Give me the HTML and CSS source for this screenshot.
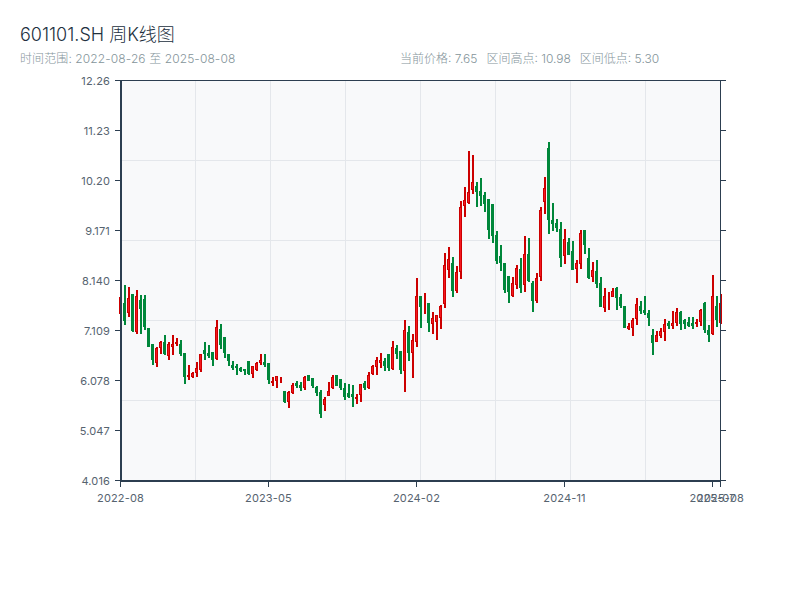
FILE: index.html
```html
<!DOCTYPE html>
<html lang="zh-CN">
<head>
  <meta charset="UTF-8">
  <title>601101.SH 周K线图</title>
  <link rel="stylesheet" href="styles.css">
</head>
<body>
  <header class="header">
    <h1 class="title">601101.SH 周K线图</h1>
    <div class="meta">
      <span class="range">时间范围: 2022-08-26 至 2025-08-08</span>
      <div class="stats">
        <span>当前价格: 7.65</span>
        <span>区间高点: 10.98</span>
        <span>区间低点: 5.30</span>
      </div>
    </div>
  </header>
  <svg class="chart" id="chart" width="800" height="440" viewBox="0 70 800 440"></svg>
  <script src="chart.js"></script>
</body>
</html>
```
FILE: styles.css
```css
* {
  margin: 0;
  padding: 0;
  box-sizing: border-box;
}

body {
  width: 800px;
  height: 600px;
  overflow: hidden;
  background: #fff;
  font-family: Inter, "Noto Sans CJK SC", sans-serif;
}

.header {
  height: 70px;
  padding: 25px 20px 0;
}

.title {
  font-size: 18px;
  font-weight: 300;
  line-height: 20px;
  color: #22303e;
}

.meta {
  display: grid;
  grid-template-columns: 380px auto;
  margin-top: 6px;
  font-size: 12px;
  font-weight: 300;
  line-height: 16px;
  color: #84949a;
}

.range {
  letter-spacing: 0.1px;
}

.stats {
  display: flex;
  gap: 9px;
}

.chart {
  display: block;
}

.plot {
  fill: #f8f9fa;
}

.grid {
  fill: #e4e7eb;
}

.axis {
  fill: #2c3e50;
}

.label {
  font-size: 11px;
  letter-spacing: 0.15px;
  fill: #56636f;
}

.label-y {
  text-anchor: end;
}

.label-x {
  text-anchor: middle;
}

.up .wick {
  fill: #cc0000;
}

.up .body {
  fill: #f4181f;
  stroke: #cc0000;
}

.down .wick {
  fill: #00873a;
}

.down .body {
  fill: #00873a;
  stroke: #00873a;
}
```
FILE: chart.js
```js
// y positions in page pixels: wick top, wick bottom, body top, body bottom, 1 = up (red)
const candles = [
  [297,314,297,314,1],[285,325,303,321,0],[287,317,298,313,1],[294,332,294,331,0],[290,334,296,332,1],
  [295,334,300,309,0],[295,330,299,327,0],[328,347,328,347,0],[344,365,344,360,0],[347,367,348,363,1],
  [341,354,342,348,1],[335,355,342,354,0],[342,360,344,356,1],[335,355,344,347,1],[338,346,342,344,1],
  [340,356,344,354,0],[353,384,353,377,0],[365,380,375,377,1],[372,378,373,377,1],[362,377,368,373,1],
  [354,372,354,370,1],[342,360,350,354,0],[345,358,353,356,0],[352,366,352,360,0],[320,360,327,359,1],
  [324,349,329,345,0],[337,358,337,353,0],[354,366,354,361,0],[361,370,365,368,0],[364,375,366,368,0],
  [367,372,368,371,0],[369,375,369,371,0],[361,375,361,374,0],[366,378,366,374,1],[362,371,363,370,1],
  [354,365,360,363,1],[354,367,362,365,0],[363,384,363,380,0],[377,386,381,383,1],[376,388,376,381,1],
  [377,383,377,378,1],[391,403,391,402,0],[391,408,392,402,1],[383,394,385,393,1],[381,388,383,386,0],
  [382,391,385,388,0],[376,390,377,388,1],[375,381,375,381,0],[378,388,378,386,0],[386,396,387,393,0],
  [390,418,392,414,0],[397,411,399,405,1],[382,396,391,396,1],[375,389,377,388,1],[375,386,375,386,0],
  [379,390,379,388,0],[383,400,388,397,0],[384,398,393,397,0],[385,407,394,397,0],[394,404,397,399,1],
  [384,402,384,395,1],[381,390,383,388,0],[372,389,375,388,1],[365,375,366,374,1],[357,375,360,367,1],
  [353,368,360,363,1],[358,371,361,366,0],[354,371,354,368,0],[341,370,347,369,1],[345,359,348,354,0],
  [351,374,351,370,0],[320,392,330,371,1],[326,361,332,353,0],[334,378,340,353,1],[278,347,296,342,1],
  [296,328,296,307,0],[293,314,305,306,1],[303,332,303,323,0],[312,334,318,324,1],[315,340,315,322,1],
  [305,329,306,318,1],[253,308,265,304,1],[247,278,259,270,1],[257,297,263,291,0],[266,293,272,291,1],
  [201,279,207,272,1],[187,217,200,206,1],[151,204,192,203,1],[155,194,182,190,1],[182,207,186,192,0],
  [178,206,191,196,0],[192,212,195,204,0],[199,239,199,230,0],[204,243,204,236,0],[231,264,235,261,0],
  [245,271,256,263,0],[263,293,263,290,0],[276,303,276,292,0],[277,297,283,296,1],[265,289,268,285,1],
  [258,293,269,288,0],[236,292,254,285,1],[238,282,254,281,0],[281,312,283,301,0],[273,303,278,301,1],
  [207,281,210,277,1],[177,214,188,202,1],[142,234,148,220,0],[203,231,220,224,0],[219,232,223,228,0],
  [222,267,229,258,0],[229,264,239,256,1],[238,255,242,255,0],[241,270,251,270,0],[260,283,263,269,1],
  [230,269,233,264,1],[230,254,230,245,0],[248,279,258,278,0],[262,282,270,277,1],[260,288,271,284,0],
  [277,307,283,307,0],[288,312,296,308,1],[292,310,295,296,1],[288,297,291,297,1],[287,310,288,298,0],
  [294,308,297,306,0],[306,328,306,328,0],[323,330,326,329,1],[318,336,320,328,1],[298,325,304,319,1],
  [301,314,306,311,0],[296,315,310,313,0],[310,326,313,318,0],[329,355,335,343,0],[331,342,335,342,1],
  [328,338,331,336,1],[319,341,324,332,1],[321,329,323,326,0],[311,329,323,326,1],[308,326,312,323,1],
  [311,330,312,324,0],[319,329,320,324,0],[317,327,322,326,0],[317,329,323,326,0],[319,327,322,324,1],
  [309,326,310,322,1],[302,333,303,330,0],[325,342,330,335,0],[275,335,296,334,1],[296,327,306,320,0],
  [294,324,303,323,1]
];

const yLabels = ['12.26', '11.23', '10.20', '9.171', '8.140', '7.109', '6.078', '5.047', '4.016'];
const xLabels = [[120, '2022-08'], [268, '2023-05'], [416, '2024-02'], [564, '2024-11'], [712, '2025-07'], [720, '2025-08']];

let out = '<rect class="plot" x="120" y="80" width="600" height="400"/>';

// grid
for (let x = 195; x < 720; x += 75) out += `<rect class="grid" x="${x}" y="80" width="1" height="400"/>`;
for (let y = 160; y < 480; y += 80) out += `<rect class="grid" x="120" y="${y}" width="600" height="1"/>`;

// candles
candles.forEach((c, i) => {
  const x = 120 + 4 * i;
  const h = Math.max(c[3] - c[2], 1);
  out += `<g class="candle ${c[4] ? 'up' : 'down'}">` +
    `<rect class="wick" x="${x}" y="${c[0]}" width="2" height="${c[1] - c[0]}"/>` +
    `<rect class="body" x="${x - 0.5}" y="${c[2] + 0.5}" width="2" height="${Math.max(h - 1, 0)}"/></g>`;
});

// axes on top of the candles
out += '<rect class="axis" x="120" y="80" width="601" height="1"/>';
out += '<rect class="axis" x="720" y="80" width="1" height="400"/>';
out += '<rect class="axis" x="120" y="80" width="2" height="402"/>';
out += '<rect class="axis" x="120" y="480" width="601" height="2"/>';

yLabels.forEach((t, i) => {
  const y = 80 + 50 * i;
  out += `<rect class="axis" x="115" y="${y}" width="5" height="1"/>`;
  out += `<rect class="axis" x="721" y="${y}" width="5" height="1"/>`;
  out += `<text class="label label-y" x="110" y="${y + 5}">${t}</text>`;
});

xLabels.forEach(([x, t]) => {
  out += `<rect class="axis" x="${x}" y="482" width="1" height="5"/>`;
  out += `<text class="label label-x" x="${x + 0.5}" y="502">${t}</text>`;
});

document.getElementById('chart').innerHTML = out;
```
